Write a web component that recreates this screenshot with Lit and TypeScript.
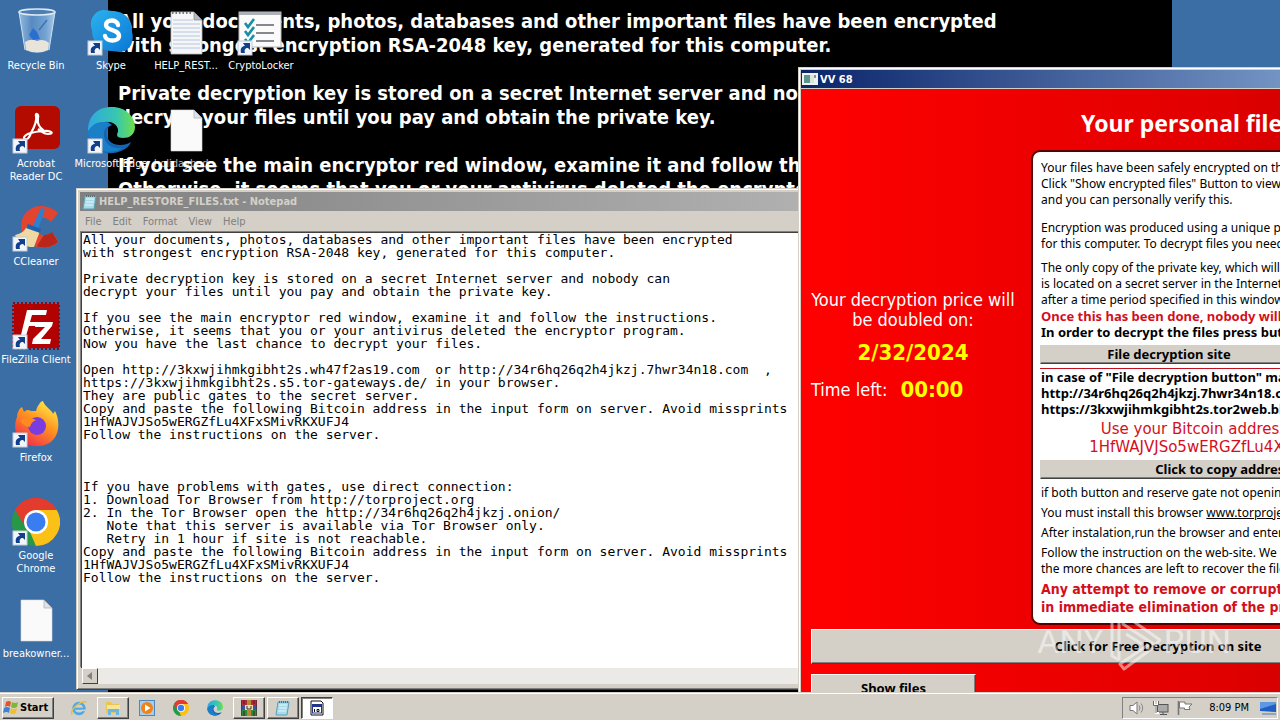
import { LitElement, html, css, svg } from "lit";
import { customElement } from "lit/decorators.js";
import { classMap } from "lit/directives/class-map.js";

/* ---------- icon artwork ---------- */

const shortcut = svg`<g>
  <rect x="1" y="33" width="14" height="14" fill="#f2f5fa" stroke="#c4ccd8" stroke-width="1"/>
  <path d="M4 45 C3 40 5 38 8 38 L6 35 L13 35 L13 42 L11 40 C8 40 7 42 8 45 Z" fill="#123f8c"/>
</g>`;

const recycle = svg`<svg viewBox="0 0 48 48">
  <defs><linearGradient id="rb" x1="0" x2="1"><stop offset="0" stop-color="#9cc3e6"/><stop offset=".35" stop-color="#5b8dc4"/><stop offset=".75" stop-color="#7aa9d8"/><stop offset="1" stop-color="#b8d4ee"/></linearGradient></defs>
  <path d="M7 4 L13 42 Q25 48 37 42 L43 4 Z" fill="url(#rb)" opacity=".9"/>
  <path d="M13 34 Q19 30 25 33 Q32 30 37 35 L36 42 Q25 47 14 42 Z" fill="#e9e4da"/>
  <path d="M17 27 l4 -7 4 4 3 7 -7 1 z" fill="#2a6fd0"/><path d="M27 22 l8 -10" stroke="#3f74b0" stroke-width="1.5"/>
  <ellipse cx="25" cy="4" rx="18" ry="3" fill="#4d7fb3" stroke="#dfeaf4" stroke-width="1.6"/>
  <path d="M7 4 L13 42 M43 4 L37 42" stroke="#cfe0f0" stroke-width="1"/>
</svg>`;

const acrobat = svg`<svg viewBox="0 0 48 48"><rect x="3" y="0" width="45" height="43" rx="6" fill="#b30b00"/>
  <path d="M15 33 C10 34 11 29 19 27 C23 20 25 14 24 10 C23 7 27 7 26 12 C25 17 28 22 32 25 C39 24 43 28 36 28 C32 28 29 25 26 23 M32 25 C27 25 23 26 19 27 C18 30 16 33 15 33" fill="none" stroke="#fff" stroke-width="2.2"/>${shortcut}</svg>`;

const ccleaner = svg`<svg viewBox="0 0 48 48">
  <path d="M46 9 C32 -4 10 2 9 22 C9 42 32 50 47 38 L40 28 C33 34 24 31 24 22 C24 13 33 11 39 18 Z" fill="#e2442f"/>
  <path d="M46 38 C40 43 32 45 25 42 L32 31 Q37 31 40 28 Z" fill="#b9261b"/>
  <path d="M29 4 L33 5 L26 26 L20 24 Z" fill="#2d7fd0"/>
  <path d="M15 22 L28 27 L22 43 C14 44 6 38 3 31 C9 30 13 27 15 22Z" fill="#efd9a3"/>
  <path d="M16 20 L29 25 L28 29 L14 24Z" fill="#1f62ad"/>${shortcut}</svg>`;

const filezilla = svg`<svg viewBox="0 0 48 48"><rect x="2" y="2" width="45" height="44" fill="#b30000"/>
  <rect x="1" y="1" width="46" height="46" fill="none" stroke="#7c1020" stroke-width="2" stroke-dasharray="2 2"/>
  <path d="M15 8 H35 L34 13 H20 L18 20 H29 L28 24 H17 L13 37 H8 Z" fill="#fff"/>
  <path d="M24 20 H41 L40 24 L29 37 H39 L38 42 H20 L21 37 L33 25 H23 Z" fill="#fff"/>${shortcut}</svg>`;

const firefox = svg`<svg viewBox="0 0 48 48">
  <defs><linearGradient id="ff" x1=".8" y1="0" x2=".2" y2="1"><stop offset="0" stop-color="#fff04a"/><stop offset=".45" stop-color="#ff9320"/><stop offset="1" stop-color="#f0264e"/></linearGradient></defs>
  <path d="M5 17 C5 12 8 8 10 7 L12 12 C15 9 17 10 19 11 L24 11 C25 6 29 1 31 1 C32 6 41 11 41 14 L43 11 C50 24 47 46 25 46 C8 46 -1 32 5 17Z" fill="url(#ff)"/>
  <circle cx="25" cy="26" r="9" fill="#7a3be0"/><path d="M8 20 Q16 16 24 20 Q19 22 18 27 Q11 27 8 20Z" fill="#ff8a1e"/>${shortcut}</svg>`;

const chromeShape = svg`<g>
  <path d="M24 24 L3.2 12 A24 24 0 0 1 44.8 12 Z" fill="#e33b2e"/>
  <path d="M24 24 L44.8 12 A24 24 0 0 1 24 48 Z" fill="#fbc116"/>
  <path d="M24 24 L24 48 A24 24 0 0 1 3.2 12 Z" fill="#279847"/>
  <path d="M24 12 H44.8 L40 24 Z" fill="#fbc116"/><path d="M34 30 L24 48 L18 34Z" fill="#fbc116"/><path d="M24 12 H44.8 A24 24 0 0 0 3.2 12 L14 30Z" fill="#e33b2e"/>
  <circle cx="24" cy="24" r="12" fill="#fff"/><circle cx="24" cy="24" r="9.5" fill="#3a7df0"/></g>`;
const chrome = svg`<svg viewBox="0 0 48 48">${chromeShape}${shortcut}</svg>`;
const chromeSmall = svg`<svg viewBox="0 0 48 48">${chromeShape}</svg>`;

const edgeShape = (id: string) => svg`<defs><linearGradient id=${id} x1="0" x2="1"><stop offset="0" stop-color="#2fa8e0"/><stop offset=".6" stop-color="#38c6b0"/><stop offset="1" stop-color="#6ee04a"/></linearGradient></defs>
  <path d="M1 24 A23 23 0 0 0 34 45 Q42 42 44 36 C36 41 22 40 20 30 Q18 22 25 19 L16 12Z" fill="#1464b4"/>
  <path d="M1 23 C2 8 12 1 25 1 C39 1 48 11 48 21 C48 29 42 32 36 32 C30 32 29 29 31 26 C32 20 26 15 18 16 C9 17 2 22 1 26Z" fill="url(#${id})"/>
  <path d="M1 26 C6 15 18 14 24 19 C18 20 15 27 18 34 C21 41 29 43 35 42 C24 50 2 46 1 26Z" fill="#1b7fc8"/>`;
const edge = svg`<svg viewBox="0 0 48 48">${edgeShape("edA")}${shortcut}</svg>`;
const edgeSmall = svg`<svg viewBox="0 0 48 48">${edgeShape("edB")}</svg>`;

const skype = svg`<svg viewBox="0 0 48 48"><defs><linearGradient id="sk" x1="0" y1="0" x2="1" y2="1"><stop offset="0" stop-color="#2bb3ee"/><stop offset="1" stop-color="#0a76d6"/></linearGradient></defs>
  <path d="M17 2 C21 2 23 3 25 3 C38 3 46 12 45 24 C48 34 42 44 33 44 C30 44 28 43 25 43 C13 43 5 34 5 22 C1 12 8 2 17 2Z" fill="url(#sk)"/>
  <path d="M31 17 C30 11 19 11 19 17 C19 23 32 21 32 28 C32 34 19 34 18 28" fill="none" stroke="#fff" stroke-width="4.4" stroke-linecap="round"/>${shortcut}</svg>`;

const blank = svg`<svg viewBox="0 0 48 48"><path d="M9 4 H32 L40 12 V45 H9Z" fill="#fafafa" stroke="#d8d8d8" stroke-width=".6"/><path d="M32 4 V12 H40Z" fill="#dfe3e8" stroke="#a8aeb5" stroke-width=".7"/></svg>`;
const textDoc = svg`<svg viewBox="0 0 48 48"><path d="M9 4 H32 L40 12 V46 H9Z" fill="#f4f6f8" stroke="#b8bcc2" stroke-width=".8"/>
  <path d="M11 12H31 M11 16H38 M11 20H38 M11 24H38 M11 28H38 M11 32H38 M11 36H38 M11 40H38" stroke="#b9c6dd" stroke-width="1"/>
  <path d="M10 5 H31" stroke="#777" stroke-width="2" stroke-dasharray="1.5 2"/><path d="M32 4 V12 H40Z" fill="#b5bac0" stroke="#80868d" stroke-width=".7"/></svg>`;
const checklist = svg`<svg viewBox="0 0 48 48"><rect x="2" y="4" width="42" height="35" fill="#fbfbfb" stroke="#b9bcc0"/><rect x="2" y="4" width="42" height="3" fill="#aeb2b8"/>
  <path d="M19 17H37 M19 25H37 M19 33H37" stroke="#85888f" stroke-width="1.8"/>
  <path d="M8 15 l3 4 6 -8 M8 23 l3 4 6 -8 M8 31 l3 4 6 -8" fill="none" stroke="#178ea6" stroke-width="2.6"/>${shortcut}</svg>`;

const notepadMini = svg`<svg viewBox="0 0 16 16"><path d="M3 2 H14 L12 15 H1Z" fill="#a6dbe8" stroke="#5d9fb5"/><path d="M4 5H12 M4 8H12 M3 11H11" stroke="#e3f6fb"/><path d="M4 2H14" stroke="#55707a" stroke-width="2" stroke-dasharray="1 1"/></svg>`;
const appMini = svg`<svg viewBox="0 0 16 16"><rect x="0" y="2" width="16" height="12" fill="#eef3f0"/><rect x="2" y="4" width="6" height="8" fill="#5d9490"/><rect x="8" y="4" width="4" height="8" fill="#d9e6dc"/><path d="M13 4V7" stroke="#333"/></svg>`;
const flag = svg`<svg viewBox="0 0 16 16"><path d="M3 2 Q6 0 8 2 L7 7 Q5 5 2 7Z" fill="#e2542a"/><path d="M9 2 Q12 4 15 2 L14 7 Q11 9 8 7Z" fill="#79b83a"/><path d="M1 8 Q4 6 7 8 L6 13 Q4 11 0 13Z" fill="#3b83d6"/><path d="M8 8 Q11 10 14 8 L13 13 Q10 15 7 13Z" fill="#f3bd2c"/></svg>`;
const ie = svg`<svg viewBox="0 0 16 16"><circle cx="8" cy="8.5" r="5.4" fill="none" stroke="#4aa9e6" stroke-width="2.6"/><path d="M4 8.7H13.4" stroke="#4aa9e6" stroke-width="2"/><path d="M10.6 10.4H15" stroke="#d4d0c8" stroke-width="1.6"/><path d="M1 14.500 C-1 10 9 0 15.500 2" fill="none" stroke="#e9bd3c" stroke-width="1.4"/></svg>`;
const folder = svg`<svg viewBox="0 0 16 16"><path d="M1 2H6L7 4H14V13H1Z" fill="#e8c650"/><path d="M2 5H15V9H2Z" fill="#f7e39a"/><path d="M3 15V9H14V15H11V12H6V15Z" fill="#6cb8e4"/></svg>`;
const player = svg`<svg viewBox="0 0 16 16"><rect x=".5" y=".5" width="15" height="15" fill="#a5cdee" stroke="#4d87bd"/><circle cx="8" cy="8" r="6" fill="#ef8318"/><path d="M6 4.6 L11.5 8 L6 11.4Z" fill="#fff"/></svg>`;
const rar = svg`<svg viewBox="0 0 16 16"><rect width="16" height="5" fill="#b02a3a"/><rect y="5" width="16" height="5" fill="#35569e"/><rect y="10" width="16" height="6" fill="#2f8a3c"/><rect x="6" width="4" height="16" fill="#b88a30"/><rect x="4" y="5" width="8" height="5" fill="#e9dcb4"/><path d="M6 6V9H10V6" fill="none" stroke="#333"/><path d="M0 0V16 M16 0V16 M3 0V4 M13 0V4 M3 11V16 M13 11V16" stroke="#4a1c28"/></svg>`;
const form = svg`<svg viewBox="0 0 16 16"><path d="M2 1H12L14 3V15H2Z" fill="#fff" stroke="#111"/><rect x="3.5" y="5" width="9" height="8" fill="#fff" stroke="#20368c"/><rect x="3" y="4" width="10" height="3" fill="#20368c"/><path d="M5.5 9V12 M8 9.5H10V11.5H8Z" stroke="#111" fill="none"/></svg>`;
const speaker = svg`<svg viewBox="0 0 16 16"><path d="M1 5.5H4L8 2V14L4 10.5H1Z" fill="#fff" stroke="#777"/><path d="M10 5.5Q12 8 10 10.5 M12 3.5Q15.4 8 12 12.5" fill="none" stroke="#888"/></svg>`;
const network = svg`<svg viewBox="0 0 16 16"><rect x="4.5" y="4.5" width="10.5" height="7.5" fill="#aaa" stroke="#555"/><path d="M7 14.5H14 M10 12V14" stroke="#555"/><path d="M1 1V5H5V1 M3 5V13H6" fill="none" stroke="#fff" stroke-width="2"/><path d="M.5 1V5.5H5.5V1 M3 5.5V13" fill="none" stroke="#666"/></svg>`;
const flagTray = svg`<svg viewBox="0 0 16 16"><path d="M1.5 1V15" stroke="#777" stroke-width="1.6"/><path d="M2.5 2H8V4H15L12 7L13 9.5H7.5V8H2.5Z" fill="#fff" stroke="#777"/></svg>`;
const showDesktop = svg`<svg viewBox="0 0 16 16"><path d="M0 2H16V12L0 11Z" fill="#1f5fc0"/><path d="M0 2H16V4L0 9Z" fill="#5c98e6"/><path d="M2 14H16" stroke="#8fa4bd" stroke-width="2"/></svg>`;

/* ---------- desktop ---------- */

@customElement("desktop-icons")
class DesktopIcons extends LitElement {
  static styles = css`
    :host { position: absolute; inset: 0 auto auto 0; }
    .cols { display: flex; }
    .col { display: flex; flex-direction: column; width: 75px; }
    button {
      height: 98px; width: 75px; padding: 8px 3px 0 0; border: 0; background: none; color: #fff;
      font: 11px/13px "DejaVu Sans Condensed", "DejaVu Sans", sans-serif;
      display: flex; flex-direction: column; align-items: center; gap: 3px;
    }
    svg { width: 48px; height: 48px; flex: none; display: block; }
    span { display: block; white-space: pre; text-align: center; }
    .faint { opacity: 0.7; }
  `;
  cols: any[][] = [
    [["Recycle Bin", recycle], ["Acrobat\nReader DC", acrobat], ["CCleaner", ccleaner], ["FileZilla Client", filezilla], ["Firefox", firefox], ["Google\nChrome", chrome], ["breakowner...", blank]],
    [["Skype", skype], ["Microsoft Edge", edge]],
    [["HELP_REST...", textDoc], ["holidaybad...", blank, true]],
    [["CryptoLocker", checklist]],
  ];
  render() {
    return html`<div class="cols">${this.cols.map((c) => html`<div class="col">${c.map(([label, icon, faint]) =>
      html`<button>${icon}<span class=${classMap({ faint: !!faint })}>${label}</span></button>`)}</div>`)}</div>`;
  }
}

/* ---------- Notepad ---------- */

const NOTE = `All your documents, photos, databases and other important files have been encrypted
with strongest encryption RSA-2048 key, generated for this computer.

Private decryption key is stored on a secret Internet server and nobody can
decrypt your files until you pay and obtain the private key.

If you see the main encryptor red window, examine it and follow the instructions.
Otherwise, it seems that you or your antivirus deleted the encryptor program.
Now you have the last chance to decrypt your files.

Open http://3kxwjihmkgibht2s.wh47f2as19.com  or http://34r6hq26q2h4jkzj.7hwr34n18.com  ,
https://3kxwjihmkgibht2s.s5.tor-gateways.de/ in your browser.
They are public gates to the secret server.
Copy and paste the following Bitcoin address in the input form on server. Avoid missprints
1HfWAJVJSo5wERGZfLu4XFxSMivRKXUFJ4
Follow the instructions on the server.



If you have problems with gates, use direct connection:
1. Download Tor Browser from http://torproject.org
2. In the Tor Browser open the http://34r6hq26q2h4jkzj.onion/
   Note that this server is available via Tor Browser only.
   Retry in 1 hour if site is not reachable.
Copy and paste the following Bitcoin address in the input form on server. Avoid missprints
1HfWAJVJSo5wERGZfLu4XFxSMivRKXUFJ4
Follow the instructions on the server.`;

@customElement("notepad-window")
class NotepadWindow extends LitElement {
  static styles = css`
    :host {
      position: absolute; left: 76px; top: 188px; bottom: 2px; width: 800px; box-sizing: border-box;
      display: flex; flex-direction: column; padding: 3px 3px 5px; background: #d4d0c8;
      border: 1px solid; border-color: #d4d0c8 #404040 #404040 #d4d0c8;
      box-shadow: inset 1px 1px #fff, inset -1px -1px #808080;
      font: 11px/13px "DejaVu Sans Condensed", "DejaVu Sans", sans-serif;
    }
    .title { display: flex; align-items: center; gap: 1px; height: 19px; padding-left: 2px; color: #d4d0c8; font-weight: bold;
      background: linear-gradient(90deg, #808080, #b5b5b5); }
    .title svg { width: 16px; height: 16px; }
    .menu { display: flex; height: 21px; align-items: center; padding-left: 5px; gap: 11px; }
    .menu button { border: 0; padding: 0; background: none; color: #808080; font: inherit; }
    textarea {
      flex: 1; margin: 0; resize: none; overflow: hidden; white-space: pre; outline: 0; border-radius: 0;
      border: 1px solid #404040; border-right: 0; border-bottom: 0; box-shadow: -1px -1px #808080; margin-left: 1px;
      padding: 0 0 0 1px; background: #fff; color: #000; font: 13px/13px "DejaVu Sans Mono", monospace;
    }
    .scroll { display: flex; height: 16px; margin-left: 2px; background: #eceae6; }
    .scroll button { width: 16px; padding: 0; background: #d4d0c8; border: 1px solid; border-color: #fff #404040 #404040 #fff; display: grid; place-items: center; }
    .scroll svg { width: 8px; height: 8px; }
  `;
  render() {
    return html`
      <div class="title">${notepadMini}<span>HELP_RESTORE_FILES.txt - Notepad</span></div>
      <div class="menu">${["File", "Edit", "Format", "View", "Help"].map((m) => html`<button>${m}</button>`)}</div>
      <textarea readonly aria-label="Document text" .value=${NOTE}></textarea>
      <div class="scroll"><button aria-label="Scroll left"><svg viewBox="0 0 8 8"><path d="M6 0V8L1 4Z" fill="#808080" /></svg></button></div>`;
  }
}

/* ---------- red window ---------- */

@customElement("locker-window")
class LockerWindow extends LitElement {
  static styles = css`
    :host {
      position: absolute; left: 798px; top: 67px; width: 720px; box-sizing: border-box;
      padding: 2px; background: #d4d0c8; border: 1px solid #d4d0c8; box-shadow: inset 1px 1px #fff;
      font: 12px/16px "Noto Sans", "Open Sans", sans-serif; white-space: nowrap;
    }
    .title { display: flex; align-items: center; gap: 2px; height: 18px; padding-left: 1px; margin-bottom: 1px; color: #fff;
      font: bold 11px/13px "DejaVu Sans Condensed", "DejaVu Sans", sans-serif;
      background: linear-gradient(90deg, #0a246a, #a6caf0); }
    .title svg { width: 16px; height: 16px; }
    .body { background: linear-gradient(90deg, #f00, #f80000 14%, #e00000 60%, #b00000); padding: 0 10px 10px; }
    h1 { margin: 0; padding: 18px 0 11px 270px; font: bold 23px/32px "Noto Sans", sans-serif; color: #fff; }
    .cols { display: grid; grid-template-columns: 220px 1fr; }
    .side { padding-top: 140px; color: #fff; font: 18px/20px "DejaVu Sans Condensed", "DejaVu Sans", sans-serif; }
    .side p { margin: 0; width: 204px; text-align: center; }
    .side strong { color: #ff0; font-size: 22px; }
    .side .date { line-height: 46px; }
    .side .left { text-align: left; display: flex; gap: 13px; align-items: center; line-height: 26px; }
    .card { background: #fff; border: 2px solid #500; border-radius: 9px; padding: 8px 7px 7px; }
    .card p { margin: 0; padding-left: 1px; }
    .card .gap { margin-top: 12px; }
    .card .near { margin-top: 8px; }
    .card .step { margin-top: 4px; }
    .card .after { margin-top: 6px; }
    .bold { font: bold 13px/16px "Noto Sans", sans-serif; }
    .red { color: #d40f1c; }
    .rule { border: 0; border-top: 1px solid #c01020; margin: 4px 0 0; }
    .card .pay { width: 410px; font: 15px/18px "DejaVu Sans", sans-serif; text-align: center; padding: 3px 0 4px; }
    .card .warn { margin-top: 3px; font: bold 14px/18px "DejaVu Sans Condensed", "DejaVu Sans", sans-serif; }
    a { color: #000; }
    button { display: block; font: bold 13px/16px "Noto Sans", sans-serif; color: #000; padding: 0 0 2px; background: #d4d0c8;
      border: 1px solid; border-color: #fff #404040 #404040 #fff; box-shadow: inset -1px -1px #808080; }
    .thin { height: 19px; border-top-color: #d4d0c8; border-left-color: #d4d0c8; }
    .site { width: 258px; margin-top: 5px; }
    .copy { width: 366px; }
    .free { width: 100%; height: 35px; margin: 4px 0 10px; }
    .show { width: 165px; height: 30px; }
  `;
  render() {
    return html`
      <div class="title">${appMini}<span>VV 68</span></div>
      <div class="body">
        <h1>Your personal files</h1>
        <div class="cols">
          <div class="side">
            <p>Your decryption price will<br />be doubled on:</p>
            <p class="date"><strong>2/32/2024</strong></p>
            <p class="left"><span>Time left:</span><strong>00:00</strong></p>
          </div>
          <div class="card">
            <p>Your files have been safely encrypted on this<br />Click "Show encrypted files" Button to view<br />and you can personally verify this.</p>
            <p class="gap">Encryption was produced using a unique public<br />for this computer. To decrypt files you need</p>
            <p class="near">The only copy of the private key, which will<br />is located on a secret server in the Internet<br />after a time period specified in this window.</p>
            <p class="bold red">Once this has been done, nobody will</p>
            <p class="bold">In order to decrypt the files press button</p>
            <button class="thin site">File decryption site</button>
            <hr class="rule" />
            <p class="bold">in case of "File decryption button" malfunction<br />http://34r6hq26q2h4jkzj.7hwr34n18.com<br />https://3kxwjihmkgibht2s.tor2web.blutmagie.de</p>
            <p class="pay red">Use your Bitcoin address for payment:<br />1HfWAJVJSo5wERGZfLu4XFxSMivRKXUFJ4</p>
            <button class="thin copy">Click to copy address</button>
            <p class="after">if both button and reserve gate not opening</p>
            <p class="step">You must install this browser <a href="#">www.torproject.org</a></p>
            <p class="step">After instalation,run the browser and enter</p>
            <p class="step">Follow the instruction on the web-site. We<br />the more chances are left to recover the files.</p>
            <p class="warn red">Any attempt to remove or corrupt<br />in immediate elimination of the private</p>
          </div>
        </div>
        <button class="free">Click for Free Decryption on site</button>
        <button class="show">Show files</button>
      </div>`;
  }
}

/* ---------- taskbar ---------- */

@customElement("task-bar")
class TaskBar extends LitElement {
  static styles = css`
    :host { display: flex; align-items: center; height: 28px; box-sizing: border-box; padding: 2px 2px 0; background: #d4d0c8;
      border-top: 1px solid #d4d0c8; box-shadow: inset 0 1px #fff; position: relative; z-index: 1;
      font: 11px/13px "DejaVu Sans Condensed", "DejaVu Sans", sans-serif; }
    svg { width: 16px; height: 16px; flex: none; display: block; }
    button { height: 22px; padding: 0; background: #d4d0c8; border: 1px solid transparent; display: grid; place-items: center; color: #000; }
    .up { border-color: #fff #404040 #404040 #fff; box-shadow: inset -1px -1px #808080; }
    .down { background: #fff; border-color: #404040 #fff #fff #404040; box-shadow: inset 1px 1px #808080; }
    .start { width: 52px; display: flex; align-items: center; gap: 1px; font: bold 11px/14px "DejaVu Sans Condensed", "DejaVu Sans", sans-serif; }
    .apps { display: flex; gap: 2px; margin-left: 9px; flex: 1; }
    .apps button { width: 32px; }
    .tray { display: flex; align-items: center; gap: 8px; height: 20px; padding: 0 1px 0 6px; border: 1px solid; border-color: #808080 #fff #fff #808080; }
    .clock { margin: 0 3px 0 8px; }
  `;
  apps: any[] = [
    ["Internet Explorer", ie, ""], ["Explorer", folder, "up"], ["Media Player", player, ""], ["Google Chrome", chromeSmall, ""],
    ["Microsoft Edge", edgeSmall, ""], ["WinRAR", rar, "up"], ["Notepad", notepadMini, "up"], ["VV 68", form, "down"],
  ];
  render() {
    return html`
      <button class="start up">${flag}<span>Start</span></button>
      <div class="apps">${this.apps.map(([n, i, c]) => html`<button class=${c} aria-label=${n}>${i}</button>`)}</div>
      <div class="tray">${speaker}${network}${flagTray}<span class="clock">8:09 PM</span>${showDesktop}</div>`;
  }
}

@customElement("app-root")
class AppRoot extends LitElement {
  static styles = css`
    :host { display: flex; flex-direction: column; height: 100vh; overflow: hidden; position: relative; }
    .desktop { flex: 1; min-height: 0; position: relative; overflow: hidden; background: #3a6ea5; padding: 0 108px; }
    .wall { height: 100%; box-sizing: border-box; background: #000; color: #fff; padding: 9px 10px; white-space: nowrap;
      font: bold 20px/24px "DejaVu Sans Condensed", "DejaVu Sans", sans-serif; }
    .wall p { margin: 0 0 24px; }
    .mark { position: absolute; right: 49px; bottom: 46px; display: flex; align-items: center; z-index: 2;
      color: #fff; opacity: 0.5; font: 34px/66px "Roboto", sans-serif; pointer-events: none; }
    .mark svg { width: 60px; height: 60px; }
  `;
  render() {
    return html`
      <div class="desktop">
        <div class="wall">
          <p>All your documents, photos, databases and other important files have been encrypted<br />with strongest encryption RSA-2048 key, generated for this computer.</p>
          <p>Private decryption key is stored on a secret Internet server and nobody can<br />decrypt your files until you pay and obtain the private key.</p>
          <p>If you see the main encryptor red window, examine it and follow the instructions.<br />Otherwise, it seems that you or your antivirus deleted the encryptor program.</p>
        </div>
        <desktop-icons></desktop-icons>
        <notepad-window></notepad-window>
        <locker-window></locker-window>
      </div>
      <task-bar></task-bar>
      <div class="mark"><span>ANY</span>
        <svg viewBox="0 0 60 60" fill="none" stroke="#fff" stroke-width="3" stroke-linejoin="round"><path d="M15 49 L8 45 V8 L15 3 V49" /><path d="M19 3 L56 29 L51 34 L19 13Z" /><path d="M22 23 L38 33 M50 36 L20 58 L16 53 L44 34" /></svg>
        <span>RUN</span></div>`;
  }
}
